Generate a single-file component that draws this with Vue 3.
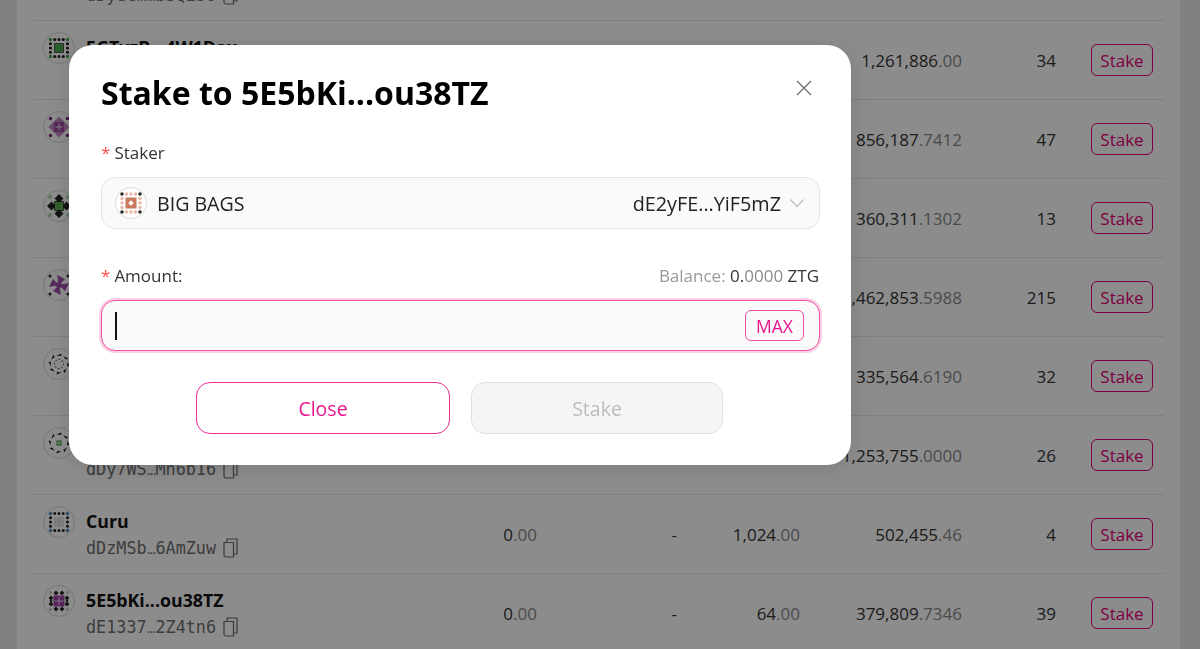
<template>
  <div class="page">
    <section class="card">
      <div v-for="row in filas" :key="row.address[0]" class="row">
        <div class="identity">
          <svg class="identicon" viewBox="0 0 32 32" width="32" height="32">
            <circle cx="16" cy="16" r="15.5" fill="#fff" stroke="#d8d8d8" />
            <g transform="translate(16 16)">
              <path v-for="(p, i) in iconos[row.icon]" :key="i" :d="p.d" :fill="p.fill" />
            </g>
          </svg>
          <div class="who">
            <div class="name">{{ row.name }}</div>
            <div class="address">
              <span>{{ row.address[0] }}</span><span class="dots">...</span><span>{{ row.address[1] }}</span>
              <svg class="copy" viewBox="0 0 15 20" width="15" height="20" fill="none" stroke="#6b6b6b" stroke-width="1.2">
                <path d="M1 4.500 h9.500 v14.500 h-7.500 a2 2 0 0 1 -2 -2 z" />
                <path d="M4 4.500 v-3.500 h10 v15 h-3.500" />
              </svg>
            </div>
          </div>
        </div>
        <div class="num">{{ row.a }}<span class="dec">.00</span></div>
        <div class="num">-</div>
        <div class="num">{{ row.b }}<span class="dec">.00</span></div>
        <div class="num">{{ row.total[0] }}<span class="dec">.{{ row.total[1] }}</span></div>
        <div class="num">{{ row.count }}</div>
        <div class="action"><button class="btn-stake">Stake</button></div>
      </div>
    </section>

    <div class="overlay">
      <div class="modal">
        <div class="modal-head">
          <h2 class="title">Stake to 5E5bKi...ou38TZ</h2>
          <svg class="close" viewBox="0 0 16 16" width="16" height="16" fill="none" stroke="#6e6e6e" stroke-width="1.3">
            <path d="M1 1 L15 15 M15 1 L1 15" />
          </svg>
        </div>

        <div class="label staker-label"><span class="req">*</span>Staker</div>
        <div class="select">
          <svg class="identicon-select" viewBox="0 0 32 32" width="32" height="32">
            <circle cx="16" cy="16" r="15.5" fill="#fff" stroke="#dcdcdc" />
            <g transform="translate(16 16)">
              <path v-for="(p, i) in iconos.bags" :key="i" :d="p.d" :fill="p.fill" />
            </g>
          </svg>
          <span class="select-name">BIG BAGS</span>
          <span class="select-address">dE2yFE...YiF5mZ</span>
          <svg class="chevron" viewBox="0 0 16 10" width="16" height="10" fill="none" stroke="#bdbdbd" stroke-width="1.2">
            <path d="M1.5 1.5 L8 8.5 L14.500 1.500" />
          </svg>
        </div>

        <div class="amount-line">
          <div class="label"><span class="req">*</span>Amount:</div>
          <div class="balance">Balance: <span class="bal-int">0.</span><span class="bal-dec">0000</span> <span class="bal-int">ZTG</span></div>
        </div>
        <div class="input">
          <span class="caret"></span>
          <button class="btn-max">MAX</button>
        </div>

        <div class="buttons">
          <button class="btn btn-close">Close</button>
          <button class="btn btn-off" disabled>Stake</button>
        </div>
      </div>
    </div>
  </div>
</template>

<script setup>
const filas = [
  { name: '', address: ['dDydcm', 'bSQi36'], a: '0', b: '0', total: ['1,000,000', '00'], count: 0, icon: 'verde' },
  { name: '5GTvzB...4W1Dax', address: ['dE3Tvz', '4W1Dax'], a: '0', b: '0', total: ['1,261,886', '00'], count: 34, icon: 'verde' },
  { name: '', address: ['dDpurp', 'leRow2'], a: '0', b: '0', total: ['856,187', '7412'], count: 47, icon: 'morado' },
  { name: '', address: ['dDgree', 'nRow33'], a: '0', b: '0', total: ['360,311', '1302'], count: 13, icon: 'rombo' },
  { name: '', address: ['dDstar', 'Row444'], a: '0', b: '0', total: ['1,462,853', '5988'], count: 215, icon: 'estrella' },
  { name: '', address: ['dDwind', 'Row555'], a: '0', b: '0', total: ['335,564', '6190'], count: 32, icon: 'molino' },
  { name: '', address: ['dDy7WS', 'Mh6b16'], a: '0', b: '0', total: ['1,253,755', '0000'], count: 26, icon: 'molinoVerde' },
  { name: 'Curu', address: ['dDzMSb', '6AmZuw'], a: '0', b: '1,024', total: ['502,455', '46'], count: 4, icon: 'curu' },
  { name: '5E5bKi...ou38TZ', address: ['dE1337', '2Z4tn6'], a: '0', b: '64', total: ['379,809', '7346'], count: 39, icon: 'cinco' },
]

// piezas sueltas de los identicons
const dot = (x, y, r = 1.3) => `M${x - r} ${y} a${r} ${r} 0 1 0 ${2 * r} 0 a${r} ${r} 0 1 0 ${-2 * r} 0 z `
const sq = (s) => `M${-s} ${-s} H${s} V${s} H${-s} z `
const rombo = (x, y, r) => `M${x} ${y - r} L${x + r} ${y} L${x} ${y + r} L${x - r} ${y} z `
const esquinas = (d, fn) => [[-d, -d], [d, -d], [d, d], [-d, d]].map(([x, y]) => fn(x, y)).join('')
const bordes = (d, fn) => {
  let out = ''
  for (const k of [-d / 2, 0, d / 2]) {
    out += fn(k, -d) + fn(k, d) + fn(-d, k) + fn(d, k)
  }
  return out
}
const cruz = (s) => `M${-s} -0.5 H${s} V0.5 H${-s} z M-0.5 ${-s} H0.5 V${s} H-0.5 z `
const giro = (deg, x, y) => {
  const r = (deg * Math.PI) / 180
  return [x * Math.cos(r) - y * Math.sin(r), x * Math.sin(r) + y * Math.cos(r)]
}
// aspas inclinadas, repetidas cada 45 grados
const molino = (k) => [0, 45, 90, 135, 180, 225, 270, 315].map((deg) => {
  const [x1, y1] = giro(deg, -2.500 * k, -8.500 * k)
  const [x2, y2] = giro(deg, 2.500 * k, -10.500 * k)
  const [x3, y3] = giro(deg, 2 * k, -8 * k)
  return `M${x1} ${y1} L${x2} ${y2} L${x3} ${y3} z `
}).join('')
const estrella = () => [0, 90, 180, 270].map((deg) => {
  const [x1, y1] = giro(deg, 0, 0)
  const [x2, y2] = giro(deg, -2, -10)
  const [x3, y3] = giro(deg, 6, -6)
  return `M${x1} ${y1} L${x2} ${y2} L${x3} ${y3} z `
}).join('')

const iconos = {
  verde: [
    { d: esquinas(8.500, (x, y) => dot(x, y, 1.700)), fill: '#43a047' },
    { d: bordes(8.500, (x, y) => dot(x, y, 1.600)), fill: '#222' },
    { d: sq(4.800), fill: '#222' },
    { d: sq(4), fill: '#4caf50' },
  ],
  morado: [
    { d: rombo(0, 0, 10.500), fill: '#c48ac4' },
    { d: esquinas(8.500, (x, y) => dot(x, y, 1.700)), fill: '#7b1f7b' },
    { d: sq(5), fill: '#a04ba0' },
    { d: cruz(3.500) + sq(0.1), fill: '#eee' },
  ],
  rombo: [
    { d: esquinas(9, (x, y) => rombo(x, y, 2.400)), fill: '#a5d6a7' },
    { d: rombo(0, -7.500, 4.500) + rombo(0, 7.500, 4.500) + rombo(-7.500, 0, 4.500) + rombo(7.500, 0, 4.500), fill: '#222' },
    { d: sq(4.800), fill: '#222' },
    { d: sq(4), fill: '#5cae4a' },
  ],
  estrella: [
    { d: esquinas(9, (x, y) => dot(x, y, 1.500)), fill: '#222' },
    { d: estrella(), fill: '#9c4fa8' },
    { d: rombo(0, 0, 4), fill: '#9c4fa8' },
  ],
  molino: [
    { d: molino(1), fill: '#222' },
    { d: molino(0.500), fill: '#444' },
  ],
  molinoVerde: [
    { d: molino(1), fill: '#222' },
    { d: sq(2.600), fill: '#43a047' },
    { d: cruz(2.600), fill: '#cde8cd' },
  ],
  curu: [
    { d: esquinas(8.500, (x, y) => rombo(x, y, 2.200)), fill: '#5c86c4' },
    { d: bordes(8.500, (x, y) => dot(x, y, 1.500)), fill: '#222' },
    { d: sq(5), fill: '#e6e6e6' },
    { d: cruz(5), fill: '#cfcfcf' },
  ],
  cinco: [
    { d: esquinas(8.500, (x, y) => dot(x, y, 1.700)), fill: '#cfcfcf' },
    { d: rombo(-3, -8, 2.400) + rombo(3, -8, 2.400) + rombo(-3, 8, 2.400) + rombo(3, 8, 2.400) + rombo(-8, -3, 2.400) + rombo(-8, 3, 2.400) + rombo(8, -3, 2.400) + rombo(8, 3, 2.400) + rombo(-8, 0, 1.600) + rombo(8, 0, 1.600), fill: '#222' },
    { d: sq(5.500), fill: '#a040a8' },
    { d: cruz(4.500), fill: '#e9cdeb' },
  ],
  bags: [
    { d: esquinas(9, (x, y) => dot(x, y, 1.800)), fill: '#2a2a2a' },
    { d: bordes(9, (x, y) => dot(x, y, 1.700)), fill: '#eab9a6' },
    { d: sq(5.500), fill: '#c9795c' },
    { d: rombo(0, 0, 2.800) + cruz(2), fill: '#fff' },
  ],
}
</script>

<style scoped>
.page {
  height: 649px;
  overflow: hidden;
  background: #ececec;
  padding: 0 20px 0 17px;
  box-sizing: border-box;
  font-family: "Open Sans", "Noto Sans", sans-serif;
  color: #111;
}

.card {
  margin-top: -58px;
  padding: 0 16px;
  height: 760px;
  background: #fff;
}

.row {
  height: 79px;
  box-sizing: border-box;
  border-bottom: 1px solid #e8e8e8;
  display: grid;
  grid-template-columns: 430px 74px 140px 123px 162px 94px 107px;
  align-items: center;
  font-size: 17px;
}

.identity {
  display: flex;
  align-items: flex-start;
  padding-left: 10px;
  gap: 11px;
}

.identicon {
  flex: none;
  display: block;
  margin-top: -3px;
}

.identicon-select {
  flex: none;
  display: block;
}

.name {
  font-weight: 700;
  font-size: 17.800px;
  line-height: 24px;
  height: 24px;
  color: #111;
}

.address {
  margin-top: 3px;
  display: flex;
  align-items: center;
  font-family: "DejaVu Sans Mono", monospace;
  font-size: 16.800px;
  line-height: 24px;
  color: #6f6f6f;
}

.dots {
  font-family: "Open Sans", sans-serif;
  font-size: 15px;
  letter-spacing: -1px;
}

.copy {
  margin-left: 7px;
}

.num {
  text-align: right;
  color: #333;
}

.dec {
  color: #8a8a8a;
}

.action {
  display: flex;
  justify-content: flex-end;
  padding-right: 10px;
}

.btn-stake {
  width: 62px;
  height: 32px;
  padding: 0;
  box-sizing: border-box;
  font: inherit;
  color: #e6007a;
  background: transparent;
  border: 1.500px solid #e6007a;
  border-radius: 6px;
}

.overlay {
  position: fixed;
  inset: 0;
  background: rgba(0, 0, 0, 0.45);
}

.modal {
  width: 782px;
  height: 420px;
  margin: 45px 0 0 69px;
  padding: 0 31px 0 32px;
  box-sizing: border-box;
  background: #fff;
  border-radius: 24px;
  box-shadow: 0 4px 24px rgba(0, 0, 0, 0.12);
}

.modal-head {
  display: flex;
  align-items: center;
  justify-content: space-between;
  height: 96px;
  padding-right: 8px;
}

.title {
  margin: -2px 0 0;
  font-size: 32px;
  font-weight: 700;
  color: #000;
}

.close {
  margin-top: -10px;
}

.label {
  font-size: 17px;
  line-height: 24px;
  color: #333;
}

.staker-label {
  margin-bottom: 12px;
}

.req {
  color: #ff4d4f;
  margin-right: 4px;
}

.select {
  height: 52px;
  box-sizing: border-box;
  display: flex;
  align-items: center;
  padding: 0 14px 0 13px;
  background: #fafafa;
  border: 1.500px solid #e4e4e4;
  border-radius: 14px;
}

.select-name {
  margin-left: 10px;
  font-size: 19.600px;
  color: #222;
}

.select-address {
  margin-left: auto;
  font-size: 19.800px;
  color: #222;
}

.chevron {
  margin-left: 8px;
}

.amount-line {
  display: flex;
  justify-content: space-between;
  align-items: center;
  margin-top: 35px;
  margin-bottom: 12px;
}

.balance {
  font-size: 17px;
  color: #999;
  padding-right: 1px;
  margin-top: -2px;
}

.bal-int {
  color: #333;
}

.bal-dec {
  color: #8a8a8a;
}

.input {
  height: 51px;
  box-sizing: border-box;
  display: flex;
  align-items: center;
  justify-content: space-between;
  padding: 0 15px 0 13px;
  background: #fafafa;
  border: 1.500px solid #f04ea8;
  border-radius: 14px;
  box-shadow: 0 0 0 2px #fbd0e6;
}

.caret {
  width: 1.500px;
  height: 28px;
  background: #111;
}

.btn-max {
  width: 59px;
  height: 31px;
  padding: 0;
  box-sizing: border-box;
  font: inherit;
  font-size: 17.500px;
  color: #e8148c;
  background: transparent;
  border: 1.500px solid #ec4fa2;
  border-radius: 6px;
}

.buttons {
  display: flex;
  justify-content: center;
  gap: 21px;
  margin-top: 31px;
  transform: translateX(-1px);
}

.btn {
  height: 52px;
  padding: 0;
  box-sizing: border-box;
  font: inherit;
  font-size: 19.500px;
  border-radius: 14px;
}

.btn-close {
  width: 254px;
  color: #e8148c;
  background: #fff;
  border: 1.500px solid #ea2b93;
}

.btn-off {
  width: 252px;
  color: #bcbcbc;
  background: #f5f5f5;
  border: 1.500px solid #e0e0e0;
}
</style>

<style>
html,
body {
  margin: 0;
  overflow: hidden;
}
</style>
